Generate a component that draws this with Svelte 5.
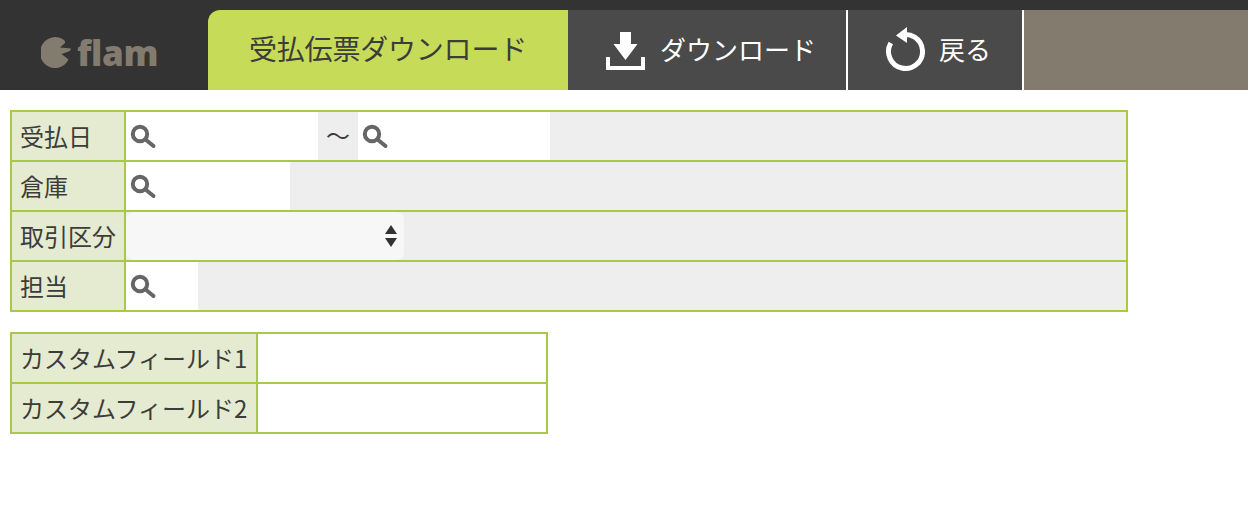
<script>
	const mainRows = [
		{ label: '受払日', type: 'range' },
		{ label: '倉庫', type: 'search', width: 164 },
		{ label: '取引区分', type: 'select' },
		{ label: '担当', type: 'search', width: 72 }
	];
	const customRows = ['カスタムフィールド1', 'カスタムフィールド2'];
</script>

{#snippet searchField(width)}
	<div class="search" style="width: {width}px;">
		<svg width="28" height="26" viewBox="0 0 28 26">
			<circle cx="11" cy="10" r="7.2" fill="none" stroke="#666" stroke-width="4" />
			<path d="M16.5 15.5 L24.5 22" stroke="#666" stroke-width="4" stroke-linecap="round" />
		</svg>
	</div>
{/snippet}

<header>
	<div class="logo">
		<svg width="30" height="32" viewBox="0 0 30 32">
			<path d="M24 7 L19 11.5 L30 12.5 L29 15 L20.5 18 L27.5 23.5 A15 15.5 0 1 1 24 5 Z" fill="#847b6f" />
		</svg>
		<span>flam</span>
	</div>
	<div class="tab">受払伝票ダウンロード</div>
	<div class="btn download">
		<svg width="40" height="40" viewBox="0 0 40 40">
			<path d="M15 1 H26 V13 H32.5 L20.5 29 L8.5 13 H15 Z" fill="#fff" />
			<path d="M1 26 V39 H40 V26 H36 V35 H5 V26 Z" fill="#fff" />
		</svg>
		<span>ダウンロード</span>
	</div>
	<div class="btn back">
		<svg width="40" height="46" viewBox="0 0 40 46">
			<path d="M14.5 9.6 A17 17 0 1 1 5.8 17" fill="none" stroke="#fff" stroke-width="5" />
			<path d="M22 1 V17 L11 9.5 Z" fill="#fff" />
		</svg>
		<span>戻る</span>
	</div>
	<div class="fill"></div>
</header>

<main>
	<div class="table wide">
		{#each mainRows as row}
			<div class="label">{row.label}</div>
			<div class="value">
				{#if row.type === 'range'}
					{@render searchField(192)}
					<span class="tilde">～</span>
					{@render searchField(192)}
				{:else if row.type === 'search'}
					{@render searchField(row.width)}
				{:else}
					<div class="select">
						<svg width="12" height="24" viewBox="0 0 12 24">
							<path d="M6 1 L12 10 H0 Z M0 14 H12 L6 23 Z" fill="#333" />
						</svg>
					</div>
				{/if}
			</div>
		{/each}
	</div>

	<div class="table custom">
		{#each customRows as label}
			<div class="label">{label}</div>
			<div class="value white"></div>
		{/each}
	</div>
</main>

<style>
	:global(body) {
		margin: 0;
		background: #fff;
		color: #3c3c3c;
		font-family: "Noto Sans CJK JP", "Liberation Sans", sans-serif;
	}
	header {
		display: flex;
		height: 80px;
		border-top: 10px solid #333;
		background: #333;
	}
	.logo {
		width: 208px;
		box-sizing: border-box;
		padding: 4px 0 0 41px;
		display: flex;
		align-items: center;
		gap: 6px;
		color: #847b6f;
		font: 800 35px "Open Sans", sans-serif;
		letter-spacing: -0.4px;
	}
	.tab {
		width: 360px;
		box-sizing: border-box;
		padding-bottom: 4px;
		display: flex;
		align-items: center;
		justify-content: center;
		background: #c6db57;
		border-top-left-radius: 12px;
		font-size: 28px;
		letter-spacing: -0.2px;
	}
	.btn {
		display: flex;
		align-items: center;
		box-sizing: border-box;
		background: #4a4a4a;
		color: #fff;
		font-size: 26px;
		border-right: 2px solid #fff;
	}
	.btn span {
		margin-bottom: 4px;
	}
	.download {
		width: 280px;
		padding-left: 37px;
		gap: 15px;
	}
	.download svg {
		margin-top: 1px;
	}
	.back {
		width: 176px;
		padding-left: 37px;
		gap: 14px;
	}
	.back svg {
		margin-bottom: 2px;
	}
	.fill {
		flex: 1;
		background: #847b6f;
	}
	main {
		display: flex;
		flex-direction: column;
		gap: 20px;
		padding: 20px 10px;
	}
	.table {
		display: grid;
		gap: 2px;
		padding: 2px;
		background: #a8c948;
		box-sizing: border-box;
	}
	.wide {
		width: 1118px;
		grid-template-columns: 112px 1fr;
		grid-auto-rows: 48px;
	}
	.custom {
		width: 538px;
		grid-template-columns: 244px 1fr;
		grid-auto-rows: 48px;
	}
	.label {
		display: flex;
		align-items: center;
		padding: 0 0 2px 8px;
		box-sizing: border-box;
		background: #e5ebd0;
		font-size: 24px;
		white-space: nowrap;
	}
	.value {
		display: flex;
		background: #eee;
	}
	.white {
		background: #fff;
	}
	.search {
		background: #fff;
		padding: 12px 0 0 3px;
		box-sizing: border-box;
	}
	.tilde {
		width: 40px;
		text-align: center;
		font-size: 24px;
		line-height: 46px;
	}
	.select {
		width: 278px;
		display: flex;
		align-items: center;
		justify-content: flex-end;
		padding-right: 7px;
		box-sizing: border-box;
		background: #f7f7f7;
		border-radius: 8px;
	}
</style>
